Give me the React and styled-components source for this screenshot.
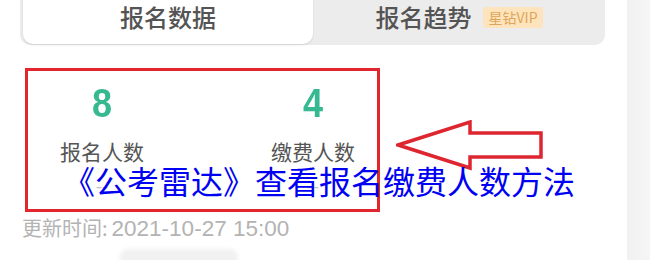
import React from "react"
import styled, { createGlobalStyle } from "styled-components"

const GlobalStyle = createGlobalStyle`
  html, body {
    margin: 0;
    padding: 0;
    background: #ffffff;
  }
  body {
    font-family: "Noto Sans CJK SC", "Noto Sans", sans-serif;
  }
`

const Page = styled.div`
  position: relative;
  display: flex;
  width: 650px;
  height: 260px;
  overflow: hidden;
  background: #ffffff;
`
const Main = styled.div`
  flex: 1;
  display: flex;
  flex-direction: column;
  padding-left: 20px;

  & > * {
    flex-shrink: 0;
  }
`
const SideStrip = styled.div`
  width: 23px;
  background: linear-gradient(90deg, #f1f1f1, #f6f6f6);
`
const TabBar = styled.div`
  display: flex;
  width: 585px;
  height: 55px;
  margin-top: -10px;
  padding: 0 0 1px 3px;
  box-sizing: border-box;
  background: #ececec;
  border-radius: 0 0 10px 10px;
`
const Tab = styled.div`
  display: flex;
  align-items: center;
  justify-content: center;
  gap: 12px;
  width: ${(p) => (p.active ? "290px" : "auto")};
  flex: ${(p) => (p.active ? "none" : "1")};
  box-sizing: border-box;
  background: ${(p) => (p.active ? "#ffffff" : "transparent")};
  border-radius: 0 0 10px 10px;
  box-shadow: ${(p) => (p.active ? "0 1px 2px rgba(0,0,0,0.12)" : "none")};
  font-size: 24px;
  font-weight: 500;
  line-height: 24px;
  color: #545454;
`
const Badge = styled.span`
  padding: 3px 5px;
  background: #fde4bd;
  border-radius: 3px;
  font-size: 14px;
  font-weight: 400;
  line-height: 15px;
  color: #e0a458;
`
const StatsRow = styled.div`
  display: flex;
  align-items: flex-start;
  margin-top: 23px;
`
const HighlightBox = styled.div`
  display: grid;
  grid-template-columns: 110px 110px;
  column-gap: 101px;
  width: 355px;
  height: 144px;
  margin-left: 5px;
  padding: 12px 0 0 19px;
  box-sizing: border-box;
  border: 3px solid #e2252f;
`
const Stat = styled.div`
  display: flex;
  flex-direction: column;
  align-items: center;
`
const StatValue = styled.div`
  font-family: "Liberation Sans Narrow", "Liberation Sans", sans-serif;
  font-weight: 700;
  font-size: 40px;
  line-height: 40px;
  color: #36b990;
  transform: scaleX(0.9);
`
const StatLabel = styled.div`
  margin-top: 18px;
  font-size: 21px;
  line-height: 21px;
  color: #555555;
`
const StatDash = styled.div`
  margin-top: 14px;
  font-size: 18px;
  line-height: 18px;
  color: #c4c4c4;
`
const Arrow = styled.svg`
  margin-left: 16px;
  margin-top: 52px;
`
const UpdatedAt = styled.div`
  margin-top: 6px;
  margin-left: 2px;
  font-size: 20px;
  line-height: 20px;
  color: #b3b3b3;
`
const DateText = styled.span`
  margin-left: 4px;
  font-family: "Liberation Sans", sans-serif;
  font-size: 22.5px;
`
const BottomHint = styled.div`
  width: 118px;
  height: 20px;
  margin: 10px 0 0 100px;
  background: #f1f1f1;
  border-radius: 8px;
  filter: blur(2px);
`
const Caption = styled.div`
  position: absolute;
  left: 63px;
  top: 164px;
  font-size: 32px;
  line-height: 32px;
  color: #0000f2;
  white-space: nowrap;
`

const App = () => {
  return (
    <>
      <GlobalStyle />
      <Page>
        <Main>
          <TabBar>
            <Tab active>报名数据</Tab>
            <Tab>
              报名趋势
              <Badge>星钻VIP</Badge>
            </Tab>
          </TabBar>
          <StatsRow>
            <HighlightBox>
              <Stat>
                <StatValue>8</StatValue>
                <StatLabel>报名人数</StatLabel>
                <StatDash>--</StatDash>
              </Stat>
              <Stat>
                <StatValue>4</StatValue>
                <StatLabel>缴费人数</StatLabel>
                <StatDash>--</StatDash>
              </Stat>
            </HighlightBox>
            <Arrow width="150" height="52" viewBox="0 0 150 52">
              <polygon
                points="2,25 74,2 74,13 145,13 145,37 74,37 74,48"
                fill="#ffffff"
                stroke="#dd2630"
                strokeWidth="3.5"
                strokeLinejoin="miter"
              />
            </Arrow>
          </StatsRow>
          <UpdatedAt>
            更新时间:<DateText>2021-10-27 15:00</DateText>
          </UpdatedAt>
          <BottomHint />
        </Main>
        <SideStrip />
        <Caption>《公考雷达》查看报名缴费人数方法</Caption>
      </Page>
    </>
  )
}

export default App
